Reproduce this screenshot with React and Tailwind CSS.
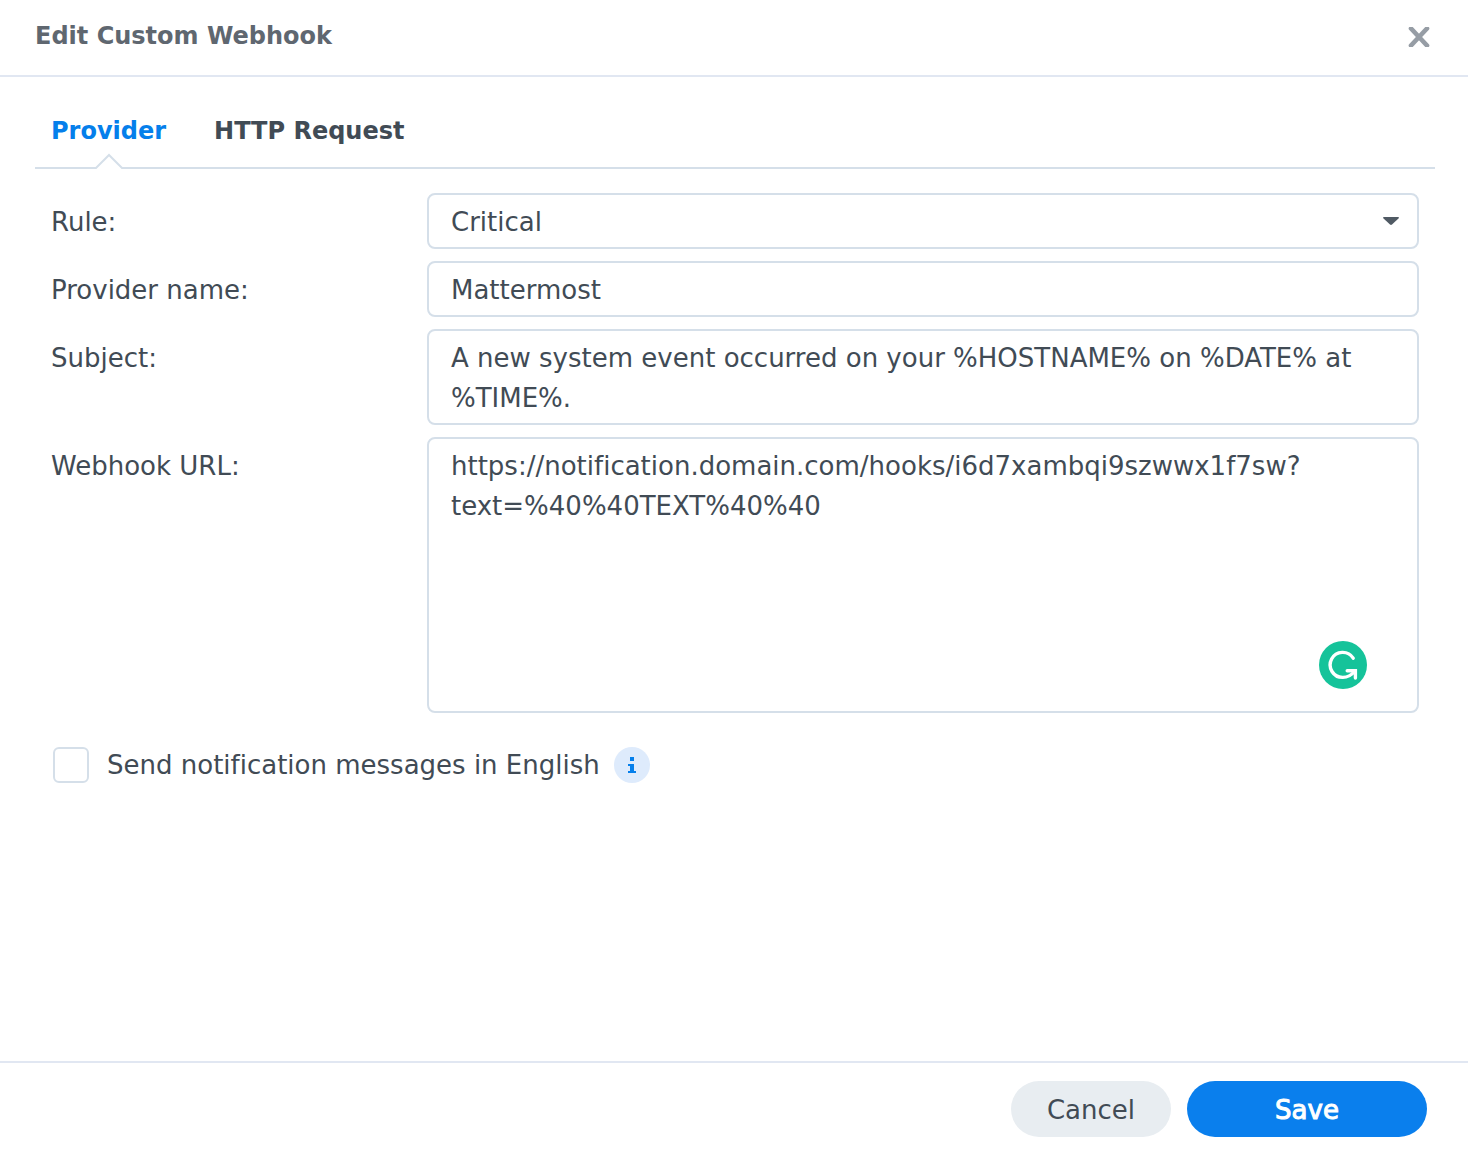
import { useState } from 'react';

const TABS = [
  { id: 'provider', label: 'Provider' },
  { id: 'request', label: 'HTTP Request' },
];

const FIELD = 'block w-full rounded-lg border-2 border-[#d5dfe9] bg-white pl-[22px] text-[26px] text-[#414b55] outline-none focus:border-[#057feb]';

function Row({ id, label, children }) {
  return (
    <div className="flex items-start">
      <label htmlFor={id} className="w-[376px] shrink-0 pt-[9px] text-[26px] leading-10">
        {label}
      </label>
      <div className="relative min-w-0 flex-1">{children}</div>
    </div>
  );
}

function Tab({ label, active, onClick }) {
  return (
    <button
      type="button"
      role="tab"
      aria-selected={active}
      onClick={onClick}
      className={`relative h-[58px] pb-3.5 text-2xl font-bold ${active ? 'text-[#057feb]' : 'text-[#414b55]'}`}
    >
      {label}
      {active && (
        <svg
          className="absolute -bottom-0.5 left-1/2 -translate-x-1/2"
          width="30"
          height="16"
          viewBox="0 0 30 16"
          fill="none"
        >
          <path d="M2 14h26v2H2z" fill="#fff" />
          <path d="M0 15h2L15 2l13 13h2" stroke="#d5dfe9" strokeWidth="2" />
        </svg>
      )}
    </button>
  );
}

function GrammarlyBadge() {
  return (
    <svg
      className="absolute bottom-6 right-[52px]"
      width="48"
      height="48"
      viewBox="0 0 48 48"
      fill="none"
    >
      <circle cx="24" cy="24" r="24" fill="#15c39a" />
      <g stroke="#fff" strokeWidth="3.400" strokeLinecap="round">
        <path d="M34.200 17.200A12.500 12.500 0 1 0 24 36.400C29 36.400 32.500 34 35.500 30.500" />
        <path d="M28.200 29.800H36.400V37" strokeLinejoin="miter" />
      </g>
    </svg>
  );
}

export default function App() {
  const [tab, setTab] = useState('provider');
  const [english, setEnglish] = useState(false);

  return (
    <div
      role="dialog"
      aria-labelledby="dialog-title"
      className="flex min-h-screen flex-col bg-white font-['DejaVu_Sans',Verdana,sans-serif] text-[#414b55] [font-variant-ligatures:none]"
    >
      <header className="flex items-center justify-between border-b-2 border-[#e1e7f2] pt-4 pb-[19px] pl-[35px] pr-[33px]">
        <h1 id="dialog-title" className="text-2xl leading-10 font-bold text-[#5f6770]">
          Edit Custom Webhook
        </h1>
        <button type="button" aria-label="Close" className="flex size-8 items-center justify-center pt-0.5">
          <svg width="22" height="20" viewBox="0 0 22 20" fill="none">
            <path d="M3 1.500l16 17M19 1.500l-16 17" stroke="#969da5" strokeWidth="4.600" strokeLinecap="round" />
          </svg>
        </button>
      </header>

      <main className="flex-1 pt-8 pl-[35px] pr-[33px]">
        <div role="tablist" className="flex gap-12 border-b-2 border-[#d5dfe9] px-4">
          {TABS.map((t) => (
            <Tab key={t.id} label={t.label} active={tab === t.id} onClick={() => setTab(t.id)} />
          ))}
        </div>

        <form className="flex flex-col gap-3 px-4 pt-6">
          <Row id="rule" label="Rule:">
            <select id="rule" defaultValue="Critical" className={`${FIELD} h-14 appearance-none pt-0.5 pr-12`}>
              <option>Critical</option>
              <option>Warning</option>
              <option>All</option>
            </select>
            <svg
              className="pointer-events-none absolute top-6 right-5"
              width="16"
              height="8"
              viewBox="0 0 16 8"
            >
              <path d="M0.500 0h15L16 1 9 7.500Q8 8.300 7 7.500L0 1z" fill="#505a64" />
            </svg>
          </Row>

          <Row id="provider-name" label="Provider name:">
            <input id="provider-name" type="text" defaultValue="Mattermost" className={`${FIELD} h-14 pt-0.5 pr-5`} />
          </Row>

          <Row id="subject" label="Subject:">
            <textarea
              id="subject"
              defaultValue="A new system event occurred on your %HOSTNAME% on %DATE% at %TIME%."
              className={`${FIELD} h-24 resize-none overflow-hidden pt-[7px] pr-5 leading-10`}
            />
          </Row>

          <Row id="webhook-url" label="Webhook URL:">
            <textarea
              id="webhook-url"
              spellCheck={false}
              defaultValue="https://notification.domain.com/hooks/i6d7xambqi9szwwx1f7sw?text=%40%40TEXT%40%40"
              className={`${FIELD} h-[276px] resize-none pt-[7px] pr-5 leading-10 [font-variant-ligatures:none]`}
            />
            <GrammarlyBadge />
          </Row>

          <div className="flex items-center pt-5 pl-0.5">
            <input
              id="english"
              type="checkbox"
              checked={english}
              onChange={(e) => setEnglish(e.target.checked)}
              className="size-9 appearance-none rounded-md border-2 border-[#d5dfe9] bg-white checked:bg-[#057feb]"
            />
            <label htmlFor="english" className="pl-[18px] text-[26px] leading-10">
              Send notification messages in English
            </label>
            <button
              type="button"
              aria-label="More information"
              className="ml-3.5 flex size-9 items-center justify-center rounded-full bg-[#deebfc]"
            >
              <svg width="10" height="18" viewBox="0 0 10 18" fill="#057feb">
                <path d="M3 1h4v4H3zM1 8h6v7h2v2H1v-2h2v-5H1z" />
              </svg>
            </button>
          </div>
        </form>
      </main>

      <footer className="flex justify-end gap-4 border-t-2 border-[#e1e7f2] pt-[18px] pb-[17px] pr-[41px]">
        <button type="button" className="h-14 w-40 rounded-full bg-[#e8edf1] pt-0.5 text-[26px]">
          Cancel
        </button>
        <button
          type="button"
          className="h-14 w-60 rounded-full bg-[#0a7fed] pt-0.5 text-[26px] text-white [-webkit-text-stroke:1px_#fff]"
        >
          Save
        </button>
      </footer>
    </div>
  );
}
